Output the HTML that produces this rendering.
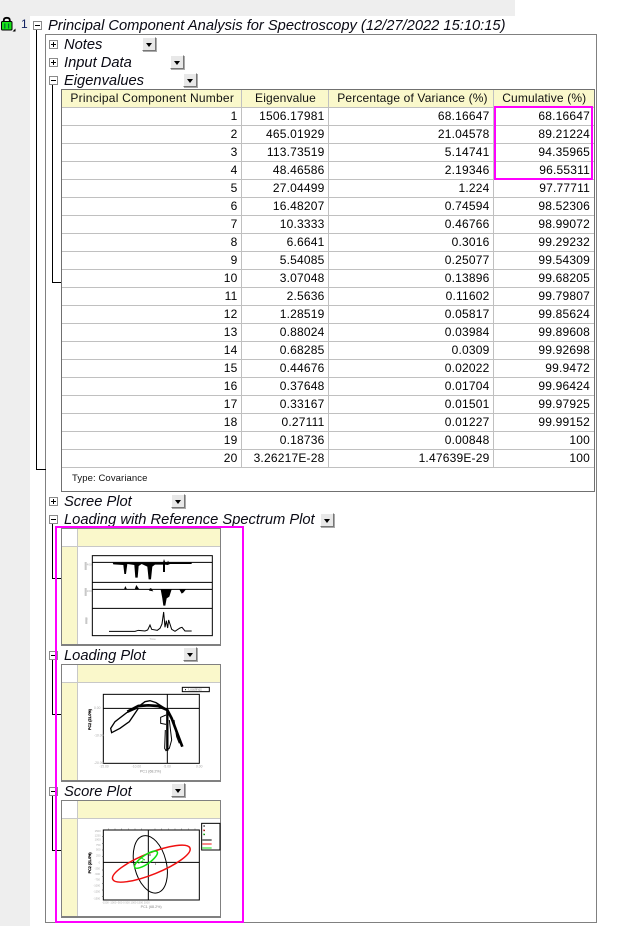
<!DOCTYPE html>
<html><head><meta charset="utf-8">
<style>
html,body{margin:0;padding:0;background:#fff}
body{position:relative;width:617px;height:926px;overflow:hidden;font-family:"Liberation Sans",sans-serif;color:#000}
.a{position:absolute;box-sizing:border-box}
.t{position:absolute;font-style:italic;font-size:14.7px;line-height:18px;white-space:nowrap;color:#0a0a14}
.pm{position:absolute;width:9px;height:9px;border:1px solid #8a8a8a;background:#fff;box-sizing:border-box}
.pm:before{content:"";position:absolute;left:1px;top:3px;width:5px;height:1px;background:#000}
.pm.p:after{content:"";position:absolute;left:3px;top:1px;width:1px;height:5px;background:#000}
.dd{position:absolute;width:14px;height:14px;background:#e8e8e8;border-top:1px solid #fff;border-left:1px solid #fff;border-right:1px solid #777;border-bottom:1px solid #777;box-sizing:border-box;box-shadow:1px 1px 0 #aaa}
.dd:after{content:"";position:absolute;left:3px;top:5px;border-left:3.5px solid transparent;border-right:3.5px solid transparent;border-top:4px solid #000}
.l{position:absolute;background:#000}
table{position:absolute;left:61px;top:90px;width:534px;border-collapse:collapse;table-layout:fixed;font-size:12px;background:#fff}
td,th{height:17px;padding:0 3px 0 0;border-right:1px solid #c0c0c0;border-bottom:1px solid #c0c0c0;text-align:right;font-weight:normal;line-height:17px;white-space:nowrap;overflow:hidden;letter-spacing:.2px}
th{background:#faf8cb;text-align:center;padding:0;color:#111;letter-spacing:.15px}
tr td:last-child{padding-right:5px}
tr td:last-child,tr th:last-child{border-right:0}
.thumb{position:absolute;left:61px;width:160px;height:118px;border:1px solid #808080;border-right-width:1px;border-bottom-width:2px;background:#fff;box-sizing:border-box}
.thumb i{position:absolute;display:block;background:#faf8cb}
</style></head><body>
<div class="a" style="left:0;top:0;width:515px;height:16px;background:#eee"></div>
<div class="a" style="left:0;top:0;width:30px;height:926px;background:#eee"></div>

<svg class="a" style="left:0;top:16px" width="18" height="16" viewBox="0 0 18 16">
<path d="M3.8 6V4.2C3.8 2.6 5 1.8 6.8 1.8S9.8 2.6 9.8 4.2V6" fill="none" stroke="#000" stroke-width="1.8"/>
<rect x="1.5" y="5.5" width="10.5" height="8.5" rx="1" fill="#18e018" stroke="#000"/>
<rect x="4.2" y="7.5" width="1.2" height="5" fill="#063"/><rect x="8" y="7.5" width="1.2" height="5" fill="#063"/>
<path d="M12.5 15.5h3v-3z" fill="#000"/>
</svg>
<div class="a" style="left:21px;top:16px;font-size:12px;line-height:16px;color:#102060">1</div>

<div class="a" style="left:45px;top:34px;width:552px;height:889px;border:1px solid #808080"></div>

<div class="l" style="left:36px;top:29px;width:1px;height:441px"></div>
<div class="l" style="left:36px;top:469px;width:10px;height:1px"></div>
<div class="l" style="left:52px;top:85px;width:1px;height:198px"></div>
<div class="l" style="left:52px;top:282px;width:10px;height:1px"></div>
<div class="l" style="left:52px;top:524px;width:1px;height:55px"></div>
<div class="l" style="left:52px;top:578px;width:10px;height:1px"></div>
<div class="l" style="left:52px;top:660px;width:1px;height:55px"></div>
<div class="l" style="left:52px;top:714px;width:10px;height:1px"></div>
<div class="l" style="left:52px;top:796px;width:1px;height:55px"></div>
<div class="l" style="left:52px;top:850px;width:10px;height:1px"></div>

<div class="pm" style="left:33px;top:21px"></div>
<div class="t" style="left:48px;top:17px">Principal Component Analysis for Spectroscopy (12/27/2022 15:10:15)</div>

<div class="pm p" style="left:49px;top:40px"></div>
<div class="t" style="left:64px;top:36px">Notes</div><div class="dd" style="left:142px;top:37px"></div>
<div class="pm p" style="left:49px;top:58px"></div>
<div class="t" style="left:64px;top:54px">Input Data</div><div class="dd" style="left:170px;top:55px"></div>
<div class="pm" style="left:49px;top:76px"></div>
<div class="t" style="left:64px;top:72px">Eigenvalues</div><div class="dd" style="left:183px;top:73px"></div>

<div class="a" style="left:61px;top:89px;width:534px;height:403px;border:1px solid #707070;z-index:2;pointer-events:none"></div>
<table>
<colgroup><col style="width:180px"><col style="width:87px"><col style="width:165px"><col style="width:102px"></colgroup>
<tr><th style="letter-spacing:.24px;padding-left:3px">Principal Component Number</th><th style="padding-left:2px">Eigenvalue</th><th style="padding-left:4px">Percentage of Variance (%)</th><th>Cumulative (%)</th></tr>
<tr><td>1</td><td>1506.17981</td><td>68.16647</td><td>68.16647</td></tr>
<tr><td>2</td><td>465.01929</td><td>21.04578</td><td>89.21224</td></tr>
<tr><td>3</td><td>113.73519</td><td>5.14741</td><td>94.35965</td></tr>
<tr><td>4</td><td>48.46586</td><td>2.19346</td><td>96.55311</td></tr>
<tr><td>5</td><td>27.04499</td><td>1.224</td><td>97.77711</td></tr>
<tr><td>6</td><td>16.48207</td><td>0.74594</td><td>98.52306</td></tr>
<tr><td>7</td><td>10.3333</td><td>0.46766</td><td>98.99072</td></tr>
<tr><td>8</td><td>6.6641</td><td>0.3016</td><td>99.29232</td></tr>
<tr><td>9</td><td>5.54085</td><td>0.25077</td><td>99.54309</td></tr>
<tr><td>10</td><td>3.07048</td><td>0.13896</td><td>99.68205</td></tr>
<tr><td>11</td><td>2.5636</td><td>0.11602</td><td>99.79807</td></tr>
<tr><td>12</td><td>1.28519</td><td>0.05817</td><td>99.85624</td></tr>
<tr><td>13</td><td>0.88024</td><td>0.03984</td><td>99.89608</td></tr>
<tr><td>14</td><td>0.68285</td><td>0.0309</td><td>99.92698</td></tr>
<tr><td>15</td><td>0.44676</td><td>0.02022</td><td>99.9472</td></tr>
<tr><td>16</td><td>0.37648</td><td>0.01704</td><td>99.96424</td></tr>
<tr><td>17</td><td>0.33167</td><td>0.01501</td><td>99.97925</td></tr>
<tr><td>18</td><td>0.27111</td><td>0.01227</td><td>99.99152</td></tr>
<tr><td>19</td><td>0.18736</td><td>0.00848</td><td>100</td></tr>
<tr><td>20</td><td>3.26217E-28</td><td>1.47639E-29</td><td>100</td></tr>
</table>
<div class="a" style="left:72px;top:473px;font-size:9.5px;line-height:12px;letter-spacing:.1px;color:#111">Type: Covariance</div>
<div class="a" style="left:494px;top:106px;width:99px;height:74px;border:2px solid #ff00ff;z-index:3"></div>

<div class="pm p" style="left:49px;top:497px"></div>
<div class="t" style="left:64px;top:493px">Scree Plot</div><div class="dd" style="left:171px;top:494px"></div>
<div class="pm" style="left:49px;top:515px"></div>
<div class="t" style="left:64px;top:511px">Loading with Reference Spectrum Plot</div><div class="dd" style="left:320px;top:513px"></div>

<div class="thumb" style="top:528px"><i style="left:15px;top:0;right:0;height:17px"></i><i style="left:0;top:18px;width:15px;bottom:0"></i><i style="left:0;top:17px;right:0;height:1px;background:#c8c8c8"></i><i style="left:15px;top:0;width:1px;bottom:0;background:#c8c8c8"></i></div>
<div class="pm" style="left:49px;top:651px"></div>
<div class="t" style="left:64px;top:647px">Loading Plot</div><div class="dd" style="left:183px;top:647px"></div>
<div class="thumb" style="top:664px"><i style="left:15px;top:0;right:0;height:17px"></i><i style="left:0;top:18px;width:15px;bottom:0"></i><i style="left:0;top:17px;right:0;height:1px;background:#c8c8c8"></i><i style="left:15px;top:0;width:1px;bottom:0;background:#c8c8c8"></i></div>
<div class="pm" style="left:49px;top:787px"></div>
<div class="t" style="left:64px;top:783px">Score Plot</div><div class="dd" style="left:171px;top:783px"></div>
<div class="thumb" style="top:800px"><i style="left:15px;top:0;right:0;height:17px"></i><i style="left:0;top:18px;width:15px;bottom:0"></i><i style="left:0;top:17px;right:0;height:1px;background:#c8c8c8"></i><i style="left:15px;top:0;width:1px;bottom:0;background:#c8c8c8"></i></div>

<svg class="a" style="left:0;top:0;z-index:2" width="617" height="926" viewBox="0 0 617 926" font-family="Liberation Sans, sans-serif">
<g transform="translate(70 550) scale(.3333)" fill="none" stroke="#000">
<rect x="67" y="17" width="360" height="240" stroke-width="3"/>
<path d="M67 37H427M67 97H427M67 118H427M67 175H427" stroke-width="3"/>
<path d="M128 38H365V42H300L293 45L285 44V66H279V44L255 44L247 50L243 88H236L232 50L215 42L206 48L203 83H196L193 45L172 42L168 72H163L160 45L130 43Z" fill="#000" stroke="none"/>
<path d="M279 38L282 27L286 38ZM292 38L294 32L297 38Z" fill="#000" stroke="none"/>
<path d="M162 118L166 108L171 118ZM194 118L199 105L208 118ZM236 118L243 114L250 124L238 122ZM272 118H305L298 140L290 145L286 167H280L277 145ZM328 118H348L340 128L335 131Z" fill="#000" stroke="none"/>
<path d="M117 244H195L205 241L225 243L233 240L240 225L245 238L262 241L270 235L276 222L281 186L285 232L289 212L293 234L296 210L305 238L315 244L330 234L336 232L345 243H365" stroke-width="3"/>
<g fill="#aaa" stroke="none" font-size="9"><text x="50" y="46">400</text><text x="50" y="126">200</text><text x="48" y="210">0</text><text x="238" y="270">Time</text></g>
<path d="M44 36h6v24h-6zM44 114h6v24h-6zM46 202h6v20h-6z" fill="#c8c8c8" stroke="none"/>
</g>

<g transform="translate(70 680) scale(.3333)" fill="none" stroke="#000">
<rect x="100" y="43" width="288" height="207" stroke-width="3"/>
<path d="M100 85H388M292 43V250" stroke-width="3"/>
<rect x="337" y="22" width="81" height="13" stroke-width="3" fill="#fff"/>
<path d="M345 29h3" stroke-width="3"/>
<text x="355" y="32" font-size="10" fill="#888" stroke="none">Loadings</text>
<path d="M200 85L170 98L135 125L122 145L125 158L150 145L178 125L205 85" stroke-width="4"/>
<path d="M172 95L205 78L235 76L265 78L292 90L305 115L320 155L337 200" stroke-width="8"/>
<path d="M205 80L225 65L240 62L258 68L285 85" stroke-width="4"/>
<path d="M292 92V212" stroke-width="7"/>
<path d="M288 105L272 112L272 130L288 133" stroke-width="3"/>
<path d="M298 120L305 180L298 205L288 212L284 205L286 150" stroke-width="3"/>
<path d="M312 120L320 170L328 190" stroke-width="3"/>
<g fill="#aaa" stroke="none" font-size="10"><text x="72" y="87">0.00</text><text x="72" y="169">-10.00</text><text x="72" y="252">-20.00</text><text x="88" y="262">-15.00</text><text x="185" y="262">-10.00</text><text x="280" y="262">-5.00</text><text x="378" y="262">0.00</text><text x="210" y="278" font-size="11" fill="#888">PC1 (68.2%)</text></g>
<text transform="translate(63 150) rotate(-90)" font-size="11" fill="#c8a8a8">PC2 (21.0%)</text>
</g>

<g transform="translate(70 820) scale(.3333)" fill="none" stroke="#000">
<rect x="100" y="30" width="288" height="210" stroke-width="3"/>
<path d="M100 127H388M235 30V240" stroke-width="3"/>
<path d="M115 30v-4M135 30v-4M155 30v-4M175 30v-4M195 30v-4M215 30v-4M255 30v-4M275 30v-4M295 30v-4M315 30v-4M335 30v-4M355 30v-4M375 30v-4M100 50h-4M100 70h-4M100 90h-4M100 110h-4M100 150h-4M100 170h-4M100 190h-4M100 210h-4M100 230h-4" stroke-width="2" stroke="#555"/>
<ellipse cx="241" cy="133" rx="48" ry="88" transform="rotate(-14 241 133)" stroke-width="3"/>
<ellipse cx="244" cy="131" rx="125" ry="32" transform="rotate(-22 244 131)" stroke="#f01010" stroke-width="4.5"/>
<ellipse cx="228" cy="119" rx="41" ry="13" transform="rotate(-35 228 119)" stroke="#10e010" stroke-width="4.5"/>
<path d="M205 130l15-8M215 115l10 5" stroke="#10e010" stroke-width="3"/>
<path d="M238 105l4 0M255 132l2 0" stroke="#000" stroke-width="3"/>
<rect x="395" y="10" width="55" height="80" fill="#fff" stroke-width="3"/>
<path d="M400 18h5M400 32h5M400 44h5" stroke-width="3"/>
<path d="M402 28v5" stroke="#f01010" stroke-width="3"/>
<path d="M402 40v5" stroke="#10e010" stroke-width="3"/>
<path d="M397 60h28" stroke-width="3"/>
<path d="M397 72h28" stroke="#f01010" stroke-width="3"/>
<path d="M397 84h28" stroke="#10e010" stroke-width="3"/>
<g fill="#aaa" stroke="none" font-size="8"><text x="74" y="36">1500</text><text x="74" y="49">1250</text><text x="74" y="62">1000</text><text x="78" y="78">750</text><text x="78" y="92">500</text><text x="78" y="110">250</text><text x="86" y="130">0</text><text x="74" y="148">-250</text><text x="74" y="165">-500</text><text x="74" y="182">-750</text><text x="70" y="200">-1000</text><text x="70" y="218">-1250</text><text x="70" y="238">-1500</text><text x="96" y="250">-1500 -1000 -500 0 500 1000 1500 2000</text><text x="212" y="264" font-size="11" fill="#888">PC1 (68.2%)</text></g>
<text transform="translate(63 160) rotate(-90)" font-size="11" fill="#c8a8a8">PC2 (21.0%)</text>
</g>
</svg>

<div class="a" style="left:55px;top:526px;width:189px;height:397px;border:2px solid #ff00ff;z-index:3"></div>
</body></html>
